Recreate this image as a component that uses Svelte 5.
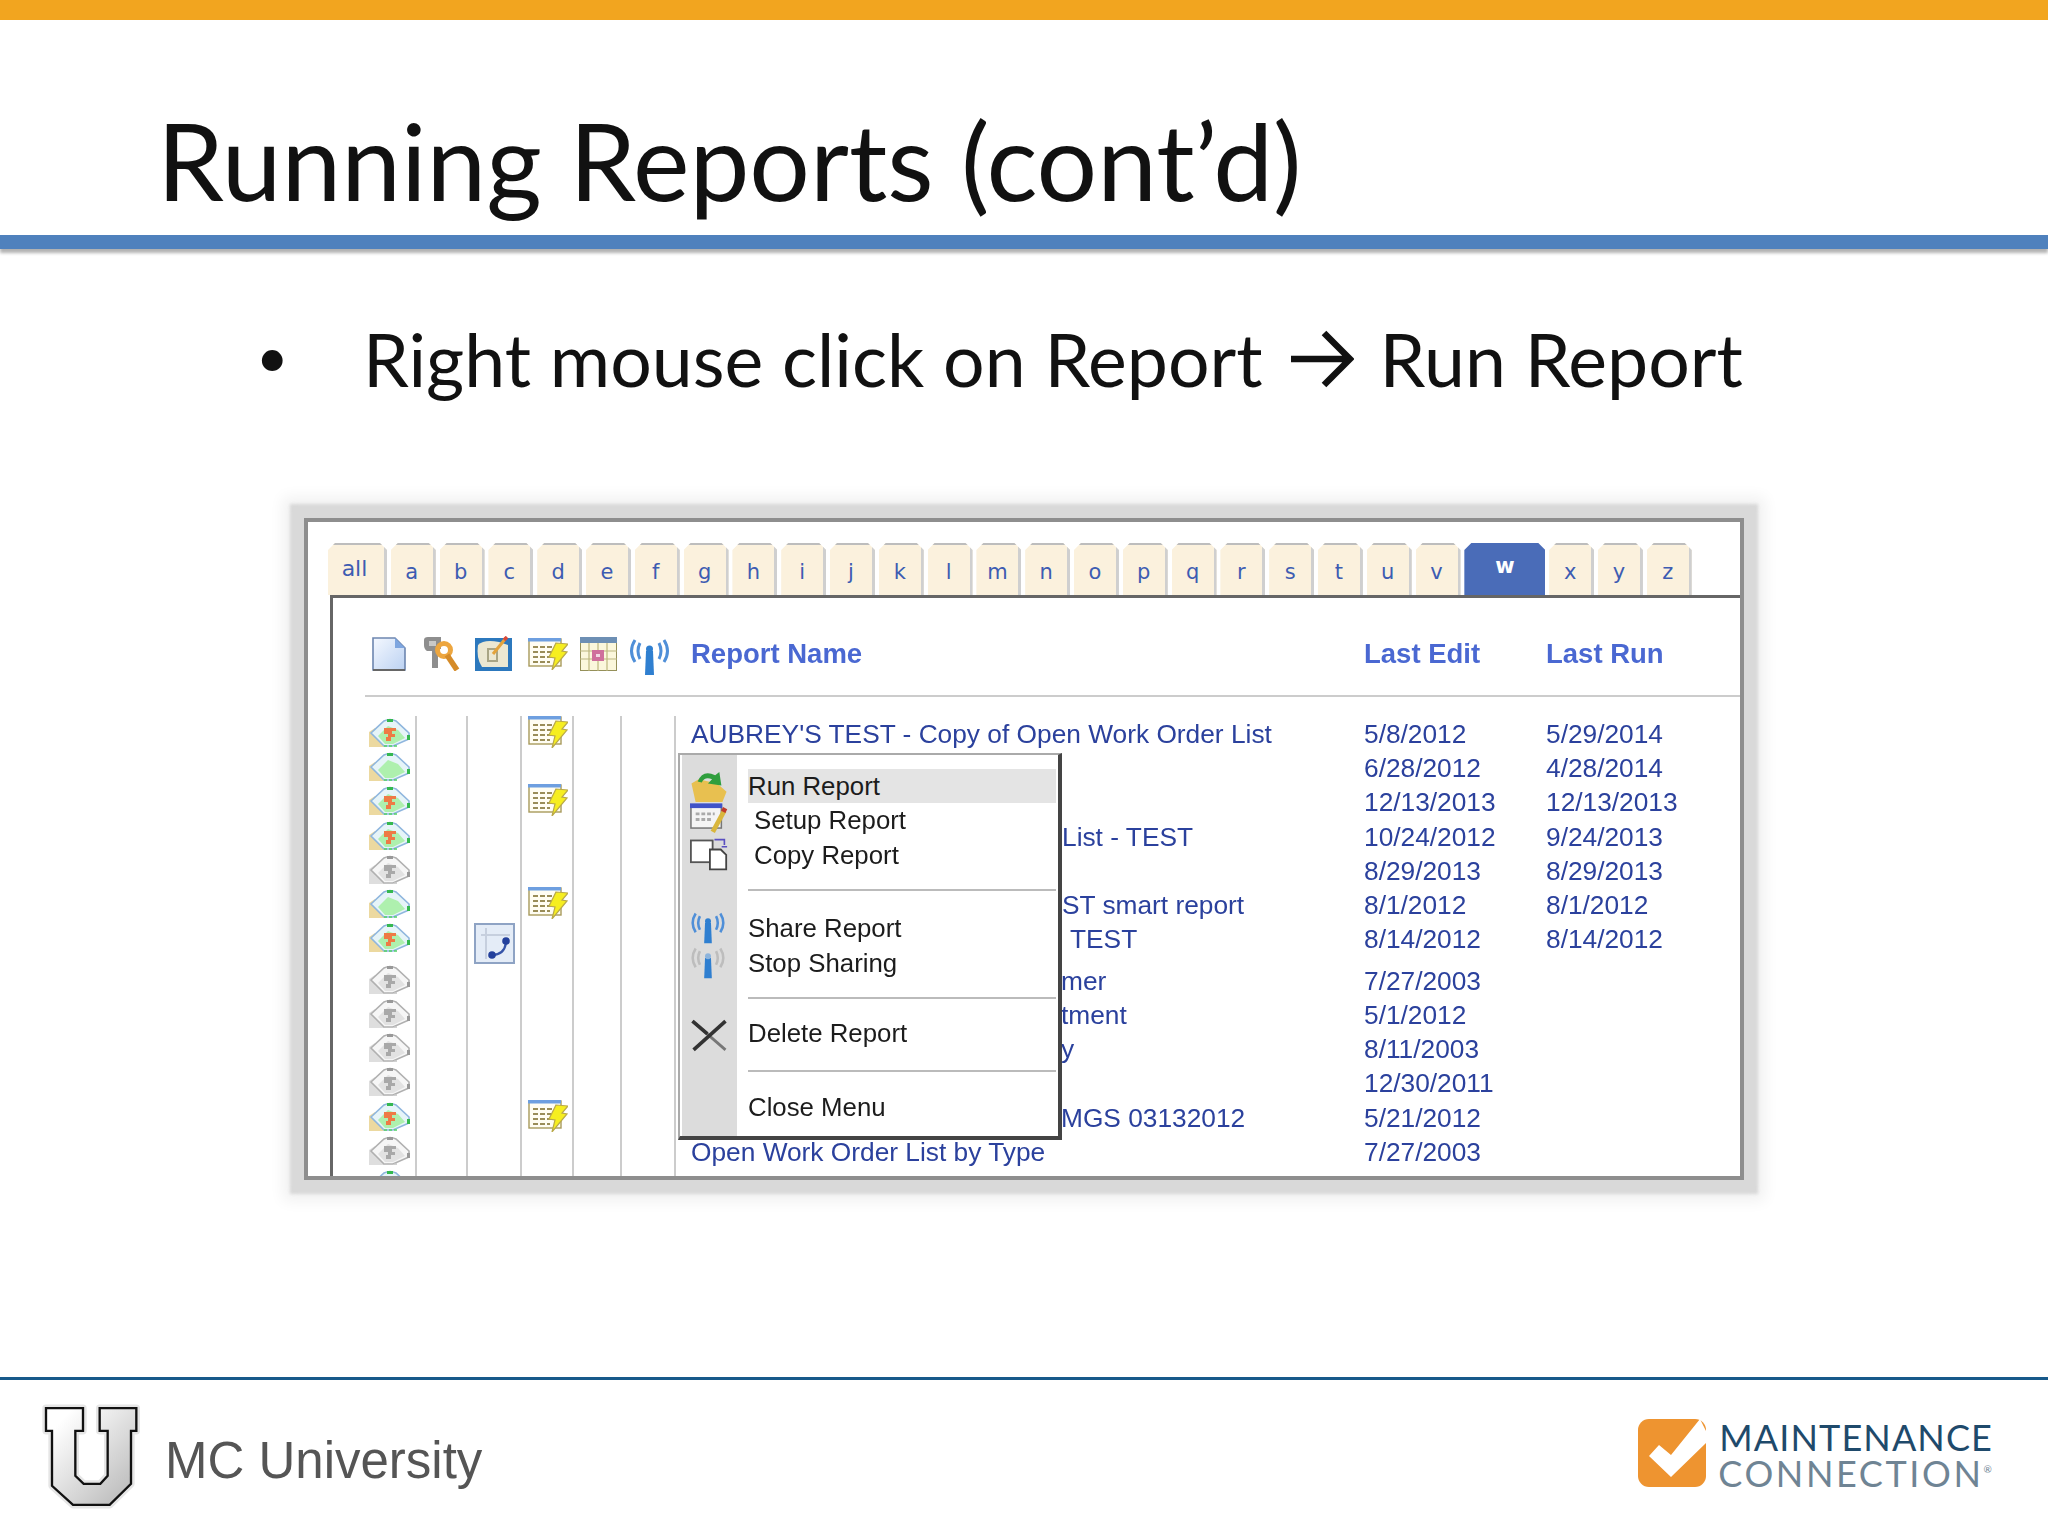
<script>
const letters = "abcdefghijklmnopqrstuvwxyz".split("");

const rows = [
    { map: "red", bolt: true, name: "AUBREY'S TEST - Copy of Open Work Order List", edit: "5/8/2012", last: "5/29/2014" },
    { map: "green", edit: "6/28/2012", last: "4/28/2014" },
    { map: "red", bolt: true, edit: "12/13/2013", last: "12/13/2013" },
    { map: "red", name: "List - TEST", indent: 386, edit: "10/24/2012", last: "9/24/2013" },
    { map: "gray", edit: "8/29/2013", last: "8/29/2013" },
    { map: "green", bolt: true, name: "ST smart report", indent: 386, edit: "8/1/2012", last: "8/1/2012" },
    { map: "red", box: true, name: "TEST", indent: 394, edit: "8/14/2012", last: "8/14/2012" },
    { map: "gray", tall: true, name: "mer", indent: 385, edit: "7/27/2003" },
    { map: "gray", name: "tment", indent: 385, edit: "5/1/2012" },
    { map: "gray", name: "y", indent: 385, edit: "8/11/2003" },
    { map: "gray", edit: "12/30/2011" },
    { map: "red", bolt: true, name: "MGS 03132012", indent: 385, edit: "5/21/2012" },
    { map: "gray", name: "Open Work Order List by Type", edit: "7/27/2003" },
    { map: "red" },
];
</script>

{#snippet mapIcon(kind)}
    {@const gray = kind === "gray"}
    <svg class="map" viewBox="0 0 42 30">
        <polygon points="0,29 0,14 6,10 17,29" fill={gray ? "#dedede" : "#ecd9a0"} />
        <path d="M2,15 L15,3 Q21,0 27,3 L40,15 L40,21 L24,28 L15,28 Z" fill={gray ? "#f6f6f6" : "#e6f4f8"} stroke={gray ? "#b0b0b0" : "#8fb6de"} stroke-width="1.6" />
        <path d="M15,28 H30" stroke={gray ? "#c4c4c4" : "#52d265"} stroke-width="1.6" stroke-dasharray="3 2" />
        <path d="M9,18 L19,8 L29,12 L36,20 L24,26 L16,26 Z" fill={gray ? "#e2e2e2" : "#aef0ae"} />
        <rect x="18" y="1" width="6" height="3" fill={gray ? "#999" : "#35b84f"} />
        <rect x="38" y="17" width="3" height="5" fill={gray ? "#999" : "#35b84f"} />
        {#if kind !== "green"}
            <path d="M15,10 H27 V13 H23 V16 H26 V19 H22 V23 H17 V19 H19 V16 H15 Z" fill={gray ? "#a8a8a8" : "#ee7a45"} />
        {/if}
    </svg>
{/snippet}

{#snippet boltIcon()}
    <svg class="bolt" viewBox="0 0 40 32">
        <rect x="1" y="1" width="32" height="27" fill="#fffdf2" stroke="#a89a5c" stroke-width="1.4" />
        <rect x="0" y="0" width="33" height="3.5" fill="#6e9fe0" />
        <path d="M5,9 H26 M5,14 H26 M5,19 H24 M5,24 H22" stroke="#9a8d58" stroke-width="2.2" stroke-dasharray="5 2" />
        <polygon points="28,5 40,6 34,13 39,14 24,32 27,20 21,19" fill="#f6ee20" stroke="#b9a94a" stroke-width="1.2" />
    </svg>
{/snippet}

{#snippet antenna(off)}
    <svg class="antenna" viewBox="0 0 41 40">
        <g fill="none" stroke={off ? "#bdbdbd" : "#4f8fd8"} stroke-width="3">
            <path d="M6,3 Q-1,14 6,25" />
            <path d="M11,6 Q7,14 11,22" />
            <path d="M35,3 Q42,14 35,25" />
            <path d="M30,6 Q34,14 30,22" />
        </g>
        <polygon points="17,14 24,14 25,38 16,38" fill="#2f7fd0" />
        <circle cx="20.5" cy="12" r="3.5" fill={off ? "#8db4dc" : "#2f7fd0"} />
    </svg>
{/snippet}

<div class="slide">
    <div class="topbar"></div>
    <h1 class="title">Running Reports (cont’d)</h1>
    <div class="rule"></div>

    <div class="point">
        <span class="dot">•</span>
        <span>Right mouse click on Report</span>
        <svg class="arrow" viewBox="0 0 66 60">
            <path d="M3,30 H60 M36,4 L62,30 L36,56" fill="none" stroke="#111" stroke-width="6.5" />
        </svg>
        <span>Run Report</span>
    </div>

    <div class="shot">
        <div class="tabs">
            <div class="tab all">all</div>
            {#each letters as l}
                <div class="tab" class:current={l === "w"}>{l}</div>
            {/each}
        </div>

        <div class="panel">
            <div class="head">
                <div class="tools">
                    <svg class="t-doc" viewBox="0 0 34 34">
                        <defs>
                            <linearGradient id="docfill" x1="0" y1="0" x2="1" y2="1">
                                <stop offset="0" stop-color="#f4f8ff" />
                                <stop offset="1" stop-color="#bcd2f2" />
                            </linearGradient>
                        </defs>
                        <path d="M1,1 H23 L33,11 V33 H1 Z" fill="url(#docfill)" stroke="#6d86b0" stroke-width="1.6" />
                        <path d="M23,1 V11 H33 Z" fill="#7ea6e0" />
                        <path d="M1,33 H33" stroke="#666" stroke-width="2" />
                    </svg>
                    <svg class="t-key" viewBox="0 0 37 34">
                        <path d="M1,3 Q1,0 5,0 H18 V12 H15 V31 H9 V14 H4 Q1,12 1,8 Z" fill="#8e8e8e" />
                        <path d="M6,4 H13 V9 H6 Z" fill="#c9c9c9" />
                        <circle cx="21" cy="13" r="6.5" fill="none" stroke="#eda63f" stroke-width="5" />
                        <path d="M24,18 L34,33" stroke="#d58b28" stroke-width="5.5" />
                    </svg>
                    <svg class="t-edit" viewBox="0 0 37 36">
                        <rect x="0" y="2" width="37" height="33" fill="#2c78bd" />
                        <path d="M3,9 Q9,3 24,6 L33,9 V31 H7 Q1,22 3,9 Z" fill="#ece8d2" />
                        <path d="M13,13 H22 V25 H13 Z" fill="none" stroke="#a9a585" stroke-width="2" />
                        <path d="M18,18 L31,2" stroke="#e3a33c" stroke-width="3" />
                        <path d="M29,4 L32,1" stroke="#d8483a" stroke-width="3.5" />
                    </svg>
                    {@render boltIcon()}
                    <svg class="t-cal" viewBox="0 0 37 34">
                        <rect x="0" y="0" width="37" height="34" fill="#fbf7dc" stroke="#95905a" stroke-width="2" />
                        <rect x="0" y="0" width="37" height="6" fill="#6d8fb4" />
                        <path d="M0,14 H37 M0,22 H37 M9,6 V34 M18,6 V34 M27,6 V34" stroke="#bcb67e" stroke-width="1.2" />
                        <rect x="12" y="13" width="12" height="11" fill="#cf6f9c" />
                        <rect x="16" y="17" width="4" height="3" fill="#f2d8e4" />
                    </svg>
                    {@render antenna(false)}
                </div>
                <span>Report Name</span>
                <span>Last Edit</span>
                <span>Last Run</span>
            </div>

            <div class="rows">
                {#each rows as r}
                    <div class="row" class:tall={r.tall}>
                        <div class="cell first">{@render mapIcon(r.map)}</div>
                        <div class="cell"></div>
                        <div class="cell third">
                            {#if r.box}
                                <svg class="boxicon" viewBox="0 0 41 41">
                                    <rect x="1" y="1" width="39" height="39" fill="#e4ecf7" stroke="#8ea3c4" stroke-width="2" />
                                    <path d="M7,12 H36 M12,5 V36" stroke="#c6cfde" stroke-width="2" />
                                    <path d="M18,32 Q30,32 32,20" fill="none" stroke="#3553a8" stroke-width="2.2" />
                                    <circle cx="32" cy="18" r="3.8" fill="#23409c" />
                                    <circle cx="18" cy="32" r="3.8" fill="#23409c" />
                                </svg>
                            {/if}
                        </div>
                        <div class="cell fourth">
                            {#if r.bolt}{@render boltIcon()}{/if}
                        </div>
                        <div class="cell"></div>
                        <div class="cell"></div>
                        <div class="name" style:padding-left={r.indent ? `${r.indent}px` : null}>{r.name ?? ""}</div>
                        <div class="date">{r.edit ?? ""}</div>
                        <div class="date">{r.last ?? ""}</div>
                    </div>
                {/each}
            </div>

            <div class="menu">
                <div class="item on">
                    <svg class="mi" viewBox="0 0 36 32">
                        <path d="M1,14 L8,10 L26,14 L35,22 L31,32 H5 Z" fill="#e8c050" />
                        <path d="M7,12 Q12,0 24,6 L28,3 L30,16 L17,14 L21,10 Q14,7 11,13 Z" fill="#2f9e3d" />
                    </svg>
                    <span>Run Report</span>
                </div>
                <div class="item inset">
                    <svg class="mi" viewBox="0 0 40 34">
                        <rect x="1" y="2" width="32" height="24" fill="#f4f4f4" stroke="#777" stroke-width="1.6" />
                        <rect x="0" y="0" width="34" height="5" fill="#3f52c8" />
                        <path d="M6,11 H26 M6,17 H24" stroke="#aaa" stroke-width="3" stroke-dasharray="4 2" />
                        <path d="M36,8 L24,30" stroke="#d9b63c" stroke-width="5" />
                        <path d="M35,9 L37,5" stroke="#c0392b" stroke-width="5" />
                    </svg>
                    <span>Setup Report</span>
                </div>
                <div class="item inset">
                    <svg class="mi" viewBox="0 0 42 35">
                        <rect x="1" y="2" width="24" height="24" fill="#fff" stroke="#555" stroke-width="2" />
                        <path d="M22,12 H34 L40,18 V34 H22 Z" fill="#fff" stroke="#444" stroke-width="2" />
                        <path d="M27,1 H38 V7 M35,9 H41" fill="none" stroke="#5a4fc0" stroke-width="1.8" />
                    </svg>
                    <span>Copy Report</span>
                </div>
                <div class="sep"></div>
                <div class="item">{@render antenna(false)}<span>Share Report</span></div>
                <div class="item">{@render antenna(true)}<span>Stop Sharing</span></div>
                <div class="sep"></div>
                <div class="item up">
                    <svg class="mi" viewBox="0 0 35 31">
                        <path d="M2,2 L33,29" stroke="#777" stroke-width="2.6" />
                        <path d="M33,2 L3,29" stroke="#333" stroke-width="3.4" />
                        <path d="M2,2 L16,14" stroke="#333" stroke-width="3.4" />
                    </svg>
                    <span>Delete Report</span>
                </div>
                <div class="sep"></div>
                <div class="item up"><span>Close Menu</span></div>
            </div>
        </div>
    </div>

    <footer class="foot">
        <div class="brand">
            <svg class="ulogo" viewBox="125 128 300 330">
                <defs>
                    <linearGradient id="ufill" x1="0" y1="0" x2="1" y2="1">
                        <stop offset="0.15" stop-color="#ffffff" />
                        <stop offset="1" stop-color="#b4b4b4" />
                    </linearGradient>
                </defs>
                <path d="M137,145 H248 V213 H225 V348 L250,372 H300 L322,348 V213 H298 V145 H408 V213 H392 V372 L328,435 H218 L155,378 V213 H137 Z" fill="url(#ufill)" stroke="#e6e6e6" stroke-width="22" stroke-linejoin="round" />
                <path d="M137,145 H248 V213 H225 V348 L250,372 H300 L322,348 V213 H298 V145 H408 V213 H392 V372 L328,435 H218 L155,378 V213 H137 Z" fill="url(#ufill)" stroke="#111" stroke-width="7" />
            </svg>
            <span>MC University</span>
        </div>
        <div class="mc">
            <svg class="check" viewBox="0 0 68 68">
                <rect x="0" y="0" width="68" height="68" rx="11" fill="#ee9430" />
                <polygon points="11,37 21,26 33,36 62,0 72,20 33,58" fill="#fff" />
            </svg>
            <div class="mcname">
                <span class="m1">MAINTENANCE</span>
                <span class="m2">CONNECTION<sup>®</sup></span>
            </div>
        </div>
    </footer>
</div>

<style>
:global(body) { margin: 0; background: #fff; }
.slide { width: 2048px; height: 1536px; display: flex; flex-direction: column; overflow: hidden; background: #fff; font-family: "Liberation Sans", Arial, sans-serif; }
.topbar { height: 20px; background: #f2a51f; flex: none; }
.title { margin: 0; height: 215px; box-sizing: border-box; padding: 76px 0 0 157px; font: 400 107px/1.2 Lato, sans-serif; color: #111; flex: none; }
.rule { height: 14px; background: #4f81bd; box-shadow: 0 4px 3px rgba(0, 0, 0, 0.3); flex: none; }
.point { display: flex; align-items: center; height: 70px; margin-top: 75px; padding-left: 256px; font: 400 73.4px/70px Lato, sans-serif; color: #111; flex: none; }
.dot { width: 107px; font-size: 56px; padding-bottom: 6px; }
.arrow { width: 66px; height: 60px; margin: 0 26px 0 25px; }

.shot { width: 1440px; height: 662px; box-sizing: border-box; margin: 124px 0 0 304px; border: 4px solid #8e8e8e; background: #fff; box-shadow: 0 0 3px 14px #d9d9d9, 0 0 14px 21px #f1f1f1; display: flex; flex-direction: column; filter: blur(0.7px); flex: none; }
.tabs { display: flex; gap: 3.8px; height: 52px; margin: 21px 0 0 20px; flex: none; font-family: "DejaVu Sans", sans-serif; }
.tab { width: 45px; box-sizing: border-box; background: #fbf1dd; border-top: 2px solid #bdbdbd; border-right: 3px solid #cfcfcf; clip-path: polygon(7px 0, calc(100% - 7px) 0, 100% 7px, 100% 100%, 0 100%, 0 7px); text-align: center; font-size: 21px; line-height: 54px; color: #3d5cb2; }
.tab.all { width: 59px; line-height: 47px; font-size: 22px; padding-right: 3px; }
.tab.current { width: 81px; background: #4a6cb8; color: #fff; font-weight: 700; border: 0; line-height: 46px; }

.panel { position: relative; flex: 1; margin-left: 22px; border-top: 3px solid #666; border-left: 3px solid #666; overflow: hidden; font-size: 26.3px; color: #2b419d; }
.head { display: grid; grid-template-columns: 319px 673px 182px 1fr; align-items: center; height: 99px; box-sizing: border-box; margin-left: 32px; padding: 14px 0 0 7px; border-bottom: 2px solid #ccc; font-size: 27.5px; font-weight: 700; color: #4a68d2; }
.tools { display: flex; align-items: center; }
.tools svg { display: block; flex: none; }
.t-doc { width: 34px; height: 34px; margin-right: 17px; }
.t-key { width: 37px; height: 34px; margin-right: 15px; }
.t-edit { width: 37px; height: 36px; margin-right: 16px; }
.t-cal { width: 37px; height: 34px; margin: 0 12px; }
.tools :global(.antenna) { width: 41px; height: 40px; margin-top: 6px; }

.rows { padding: 19px 0 0 32px; }
.row { display: grid; grid-template-columns: 52px 51px 54px 52px 48px 54px 688px 182px 1fr; height: 34.2px; align-items: stretch; line-height: 36px; }
.row.tall { height: 41.7px; }
.cell { box-sizing: border-box; border-right: 2px solid #ccc; position: relative; min-width: 0; }
.row.tall .name, .row.tall .date { padding-top: 7.5px; }
.first { padding-left: 4px; }
.row.tall .first { padding-top: 7.5px; }
.third { padding-left: 6px; }
.fourth { padding-left: 6px; }
.map { display: block; width: 42px; height: 30px; margin-top: 2px; }
.bolt { display: block; width: 40px; height: 32px; }
.boxicon { position: absolute; left: 6px; top: 2px; width: 41px; height: 41px; }
.name { padding-left: 15px; white-space: nowrap; }
.date { white-space: nowrap; }

.menu { position: absolute; left: 345px; top: 155px; width: 384px; height: 387px; box-sizing: border-box; padding: 14px 2px 0 2px; background: linear-gradient(to right, #fff 2px, #dcdcdc 2px, #dcdcdc 57px, #fff 57px); border: 2px solid #aaa; border-right: 4px solid #444; border-bottom: 4px solid #444; color: #1c1c1c; font-size: 25.8px; }
.item { display: flex; align-items: center; height: 34.4px; box-sizing: border-box; padding-left: 66px; position: relative; white-space: nowrap; }
.item.up { padding-bottom: 5px; }
.item span { flex: 1; line-height: 34.4px; }
.item.on span { background: #e4e4e4; }
.item.inset span { padding-left: 6px; }
.item :global(svg) { position: absolute; left: 8px; top: 0; }
.mi { width: 38px; height: 33px; }
.menu :global(.antenna) { width: 36px; height: 34px; }
.sep { height: 2px; margin: 17px 0 20px 66px; background: #bbb; }

.foot { margin-top: auto; height: 159px; box-sizing: border-box; border-top: 3px solid #17598a; display: flex; justify-content: space-between; flex: none; }
.brand { display: flex; align-items: center; padding: 0 0 18px 42px; font-size: 51px; color: #555; gap: 23px; }
.ulogo { width: 100px; height: 113px; margin-top: 16px; }
.brand span { margin-top: 22px; }
.mc { display: flex; gap: 13px; padding: 39px 55px 0 0; }
.check { width: 68px; height: 68px; }
.mcname { display: flex; flex-direction: column; font-family: Lato, sans-serif; font-size: 36px; line-height: 36px; margin-top: 0; }
.m1 { color: #1f4a6b; letter-spacing: 1.1px; }
.m2 { color: #6f8494; letter-spacing: 2.6px; margin-left: -1px; }
.m2 sup { font-size: 10px; vertical-align: 14px; line-height: 0; letter-spacing: 0; }
</style>
